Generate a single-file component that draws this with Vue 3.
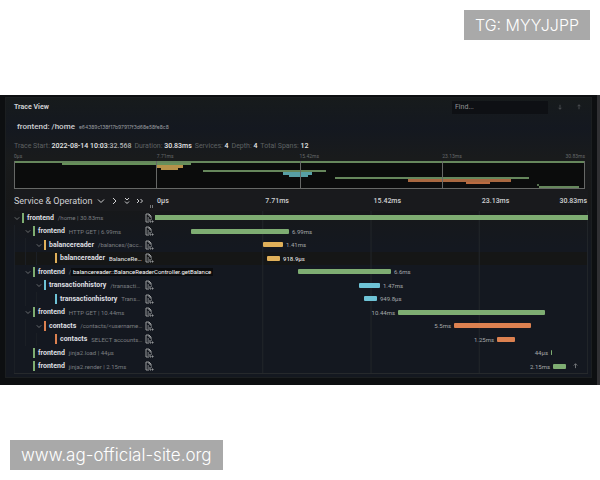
<script setup>
import { ref } from 'vue'

const total = 433
const query = ref('')

const colors = {
  green: '#7ead72',
  yellow: '#e0b05a',
  blue: '#6ec3d6',
  orange: '#dc8150'
}

const summary = [
  { label: 'Trace Start:', value: '2022-08-14 10:03', rest: ':32.568' },
  { label: 'Duration:', value: '30.83ms' },
  { label: 'Services:', value: '4' },
  { label: 'Depth:', value: '4' },
  { label: 'Total Spans:', value: '12' }
]

const ticks = ['0µs', '7.71ms', '15.42ms', '23.13ms', '30.83ms']

const spans = [
  { service: 'frontend', op: '/home | 30.83ms', depth: 0, open: true, color: 'green', start: 0, width: 433 },
  { service: 'frontend', op: 'HTTP GET | 6.99ms', depth: 1, open: true, color: 'green', start: 36, width: 98, label: '6.99ms' },
  { service: 'balancereader', op: '/balances/{acc…', depth: 2, open: true, color: 'yellow', start: 108, width: 20, label: '1.41ms' },
  { service: 'balancereader', op: 'BalanceRe…', depth: 3, color: 'yellow', start: 112, width: 13, label: '918.9µs', active: true },
  { service: 'frontend', op: '/', tip: 'balancereader::BalanceReaderController.getBalance', depth: 1, open: true, color: 'green', start: 143, width: 93, label: '6.6ms' },
  { service: 'transactionhistory', op: '/transacti…', depth: 2, open: true, color: 'blue', start: 204, width: 21, label: '1.47ms' },
  { service: 'transactionhistory', op: 'Trans…', depth: 3, color: 'blue', start: 209, width: 13, label: '949.8µs' },
  { service: 'frontend', op: 'HTTP GET | 10.44ms', depth: 1, open: true, color: 'green', start: 243, width: 147, label: '10.44ms', before: true },
  { service: 'contacts', op: '/contacts/<username…', depth: 2, open: true, color: 'orange', start: 299, width: 77, label: '5.5ms', before: true },
  { service: 'contacts', op: 'SELECT accounts…', depth: 3, color: 'orange', start: 342, width: 18, label: '1.25ms', before: true },
  { service: 'frontend', op: 'jinja2.load | 44µs', depth: 1, color: 'green', start: 396, width: 1, label: '44µs', before: true },
  { service: 'frontend', op: 'jinja2.render | 2.15ms', depth: 1, color: 'green', start: 398, width: 13, label: '2.15ms', before: true }
]

// minimap bars: x, y, width, height
const mini = [
  { x: 0, y: 0, w: 570, h: 2, fill: '#66875c' },
  { x: 48, y: 2, w: 129, h: 2, fill: '#66905a' },
  { x: 142, y: 4, w: 27, h: 3, fill: '#b5914a' },
  { x: 147, y: 7, w: 17, h: 2, fill: '#b5914a' },
  { x: 189, y: 9, w: 122, h: 2, fill: '#66875c' },
  { x: 269, y: 11, w: 28, h: 3, fill: '#579fa5' },
  { x: 275, y: 14, w: 18, h: 2, fill: '#579fa5' },
  { x: 320, y: 16, w: 194, h: 2, fill: '#66875c' },
  { x: 393, y: 18, w: 103, h: 3, fill: '#a86840' },
  { x: 451, y: 21, w: 24, h: 2, fill: '#b96b40' },
  { x: 522, y: 23, w: 2, h: 2, fill: '#55704e' },
  { x: 524, y: 25, w: 40, h: 2, fill: '#66875c' }
]

const pct = (n) => (n / total) * 100 + '%'

const barStyle = (s) => ({
  left: pct(s.start),
  width: pct(s.width),
  backgroundColor: colors[s.color]
})

const labelStyle = (s) =>
  s.before ? { right: pct(total - s.start) } : { left: pct(s.start + s.width) }
</script>

<template>
  <div class="page">
    <div class="top">
      <span class="mark">TG: MYYJJPP</span>
    </div>

    <main class="screen">
      <section class="card">
        <div class="toolbar">
          <h1>Trace View</h1>
          <input v-model="query" type="text" class="find" placeholder="Find..." aria-label="Find" />
          <button class="nav" aria-label="Next result">
            <svg viewBox="0 0 8 8"><path d="M4 1v6M2 5l2 2 2-2" /></svg>
          </button>
          <button class="nav" aria-label="Previous result">
            <svg viewBox="0 0 8 8"><path d="M4 7V1M2 3l2-2 2 2" /></svg>
          </button>
        </div>

        <h2>frontend: /home <small>e64389c138f17b97917f3d68e58fe8c8</small></h2>

        <div class="summary">
          <span v-for="item in summary" :key="item.label">
            {{ item.label }} <b>{{ item.value }}</b><b v-if="item.rest" class="rest">{{ item.rest }}</b>
          </span>
        </div>

        <div class="mini-ticks">
          <span v-for="t in ticks" :key="t">{{ t }}</span>
        </div>
        <svg class="minimap" viewBox="0 0 570 28" preserveAspectRatio="none" shape-rendering="crispEdges">
          <rect width="570" height="28" fill="#0b0c0c" />
          <rect v-for="(m, i) in mini" :key="i" :x="m.x" :y="m.y" :width="m.w" :height="m.h" :fill="m.fill" />
          <path d="M142.5 0v28M285.5 0v28M427.5 0v28" />
          <path d="M.5 0v27.5h569V0" />
        </svg>

        <div class="head">
          <div class="head-name">
            <span class="head-title">Service &amp; Operation</span>
            <button aria-label="Expand one"><svg viewBox="0 0 8 8"><path d="M1 2.5l3 3 3-3" /></svg></button>
            <button aria-label="Collapse one"><svg viewBox="0 0 8 8"><path d="M3 1l3 3-3 3" /></svg></button>
            <button aria-label="Expand all"><svg viewBox="0 0 8 8"><path d="M2 1l2 2 2-2M2 4.5l2 2 2-2" /></svg></button>
            <button aria-label="Collapse all"><svg viewBox="0 0 8 8"><path d="M1 2l2 2-2 2M4.5 2l2 2-2 2" /></svg></button>
            <i class="resizer"></i>
          </div>
          <div class="head-ticks">
            <span v-for="t in ticks" :key="t">{{ t }}</span>
          </div>
        </div>

        <div class="rows">
          <div v-for="(s, i) in spans" :key="i" class="row" :class="{ active: s.active }">
            <div class="name">
              <i v-for="n in s.depth" :key="n" class="guide"></i>
              <button class="toggle" :aria-label="'Toggle ' + s.service">
                <svg v-if="s.open" viewBox="0 0 8 8"><path d="M1 3l3 3 3-3" /></svg>
              </button>
              <i class="stripe" :style="{ backgroundColor: colors[s.color] }"></i>
              <span class="service">{{ s.service }}</span>
              <span class="op">{{ s.op }}</span>
              <span v-if="s.tip" class="tip">{{ s.tip }}</span>
              <button v-else class="logs" aria-label="Logs for this span">
                <svg viewBox="0 0 9 10">
                  <path d="M4 9H1V1h3l2 2v2M4 1v2h2M2.5 5H4M2.5 7H4M5 6v3h1M6 6h1M7 8h1v1H7z" />
                </svg>
              </button>
            </div>
            <div class="track">
              <i class="bar" :class="{ root: i === 0 }" :style="barStyle(s)"></i>
              <span v-if="s.label" class="time" :style="labelStyle(s)">{{ s.label }}</span>
              <svg v-if="i === spans.length - 1" class="up" viewBox="0 0 8 8"><path d="M4 7V2M2 4l2-2 2 2" /></svg>
            </div>
          </div>
        </div>
      </section>
    </main>

    <div class="bottom">
      <span class="mark">www.ag-official-site.org</span>
    </div>
  </div>
</template>

<style>
body {
  margin: 0;
  background: #fff;
}
</style>

<style scoped>
.page {
  font-family: Roboto, sans-serif;
  color: #d0d1d3;
}

.top {
  display: flex;
  justify-content: flex-end;
  padding: 10px 10px 55px;
}

.bottom {
  display: flex;
  padding: 55px 10px 10px;
}

.mark {
  padding: 0 11px;
  background: #a9a9a9;
  color: #fff;
  font: 300 17px/30px Inter, sans-serif;
}

.top .mark {
  font-size: 16px;
}

.screen {
  padding: 2px 5px 7px;
  background: #0d0f11;
  border-right: 3px solid #303033;
}

.card {
  padding: 0 3px 3px 8px;
  background: linear-gradient(#171b1c, #141820 30px, #191b1c 60px, #171819 105px, #141820 150px);
  border: 1px solid #1b1e20;
}

button {
  display: flex;
  padding: 0;
  border: 0;
  background: none;
  color: inherit;
  cursor: pointer;
}

svg {
  fill: none;
}

path {
  stroke: currentColor;
}

.toolbar {
  display: flex;
  align-items: center;
  height: 18px;
}

h1 {
  flex: 1;
  margin: 0;
  font-size: 7px;
  font-weight: 700;
}

.find {
  box-sizing: border-box;
  width: 96px;
  height: 13px;
  margin-right: 2px;
  padding: 0 3px;
  border: 0;
  background: #0e1014;
  color: #aaa;
  font: 7px Roboto, sans-serif;
}

.find::placeholder {
  color: #929395;
}

.nav {
  justify-content: center;
  width: 19px;
  color: #55585b;
}

.nav svg {
  width: 6px;
  height: 6px;
}

h2 {
  margin: 0 3px;
  font-size: 8px;
  line-height: 22px;
  font-weight: 500;
}

h2 small {
  margin-left: 2px;
  font: 5px Inter, sans-serif;
  color: #9b9da0;
}

.summary {
  display: flex;
  gap: 3px;
  font-size: 7px;
  line-height: 16px;
  color: #5e6163;
}

.summary b {
  font-weight: 500;
  color: #e6e7e7;
}

.summary .rest {
  color: #b4b5b6;
}

.mini-ticks {
  display: grid;
  grid-template-columns: repeat(4, 1fr) 0;
  margin-right: 3px;
  padding-bottom: 2px;
  font-size: 5px;
  line-height: 5px;
  color: #66696b;
}

.mini-ticks span:last-child,
.head-ticks span:last-child {
  justify-self: end;
}

.minimap {
  display: block;
  width: calc(100% - 3px);
  height: 28px;
}

.minimap path {
  stroke: #666866;
}

.head {
  display: flex;
  height: 21px;
  align-items: center;
  margin-top: 1px;
  background: #191a1d;
}

.head-name {
  position: relative;
  display: flex;
  flex: 0 0 141px;
  align-items: center;
  gap: 5px;
}

.head-title {
  font-size: 9px;
  white-space: nowrap;
}

.head-name svg {
  width: 8px;
  height: 8px;
}

.resizer {
  position: absolute;
  right: 2px;
  bottom: -2px;
  width: 1px;
  height: 3px;
  border: 1px solid #77797b;
  border-width: 0 1px;
}

.head-ticks {
  display: grid;
  flex: 1;
  grid-template-columns: repeat(4, 1fr) 0;
  font-size: 7px;
  font-weight: 500;
}

.head-ticks span {
  padding: 0 1px 0 2px;
}

.rows {
  display: grid;
  grid-auto-rows: 1fr;
  height: 162px;
  border-bottom: 1px solid #26292c;
}

.row {
  display: flex;
}

.row.active {
  background: #151616;
}

.name {
  position: relative;
  display: flex;
  flex: 0 0 141px;
  box-sizing: border-box;
  align-items: center;
  min-width: 0;
  padding-right: 1px;
  white-space: nowrap;
}

.guide {
  flex: 0 0 10px;
  align-self: stretch;
  border-left: 1px solid #1b1f25;
}

.toggle {
  flex: 0 0 6px;
  margin-right: 2px;
  color: #85888a;
}

.toggle svg {
  width: 6px;
  height: 6px;
}

.stripe {
  flex: 0 0 2px;
  height: 10px;
  margin-right: 3px;
}

.service {
  margin-right: 4px;
  font-size: 7px;
  font-weight: 700;
  color: #dedfe0;
}

.op {
  flex: 1;
  font-size: 6px;
  color: #7b7e81;
}

.active .op,
.active .time {
  font-weight: 500;
  color: #d8d8d8;
}

.logs {
  flex: 0 0 9px;
  color: #9a9c9e;
}

.logs svg {
  width: 9px;
  height: 10px;
}

.tip {
  position: absolute;
  z-index: 1;
  left: 57px;
  padding: 0 2px;
  background: #0b0c0e;
  font-size: 6px;
  line-height: 8px;
  color: #fff;
}

.track {
  position: relative;
  flex: 1;
  background: linear-gradient(90deg, transparent calc(100% - 1px), #212529 0) 0 0 / 25% 100%;
}

.bar {
  position: absolute;
  top: 4px;
  height: 5px;
  border-radius: 1px;
}

.bar.root {
  border-radius: 0;
}

.time {
  position: absolute;
  top: 2px;
  padding: 0 3px;
  font-size: 6px;
  line-height: 9px;
  color: #a6a8ab;
}

.up {
  position: absolute;
  top: 2px;
  right: 9px;
  width: 7px;
  height: 7px;
  color: #7b7e80;
}
</style>
